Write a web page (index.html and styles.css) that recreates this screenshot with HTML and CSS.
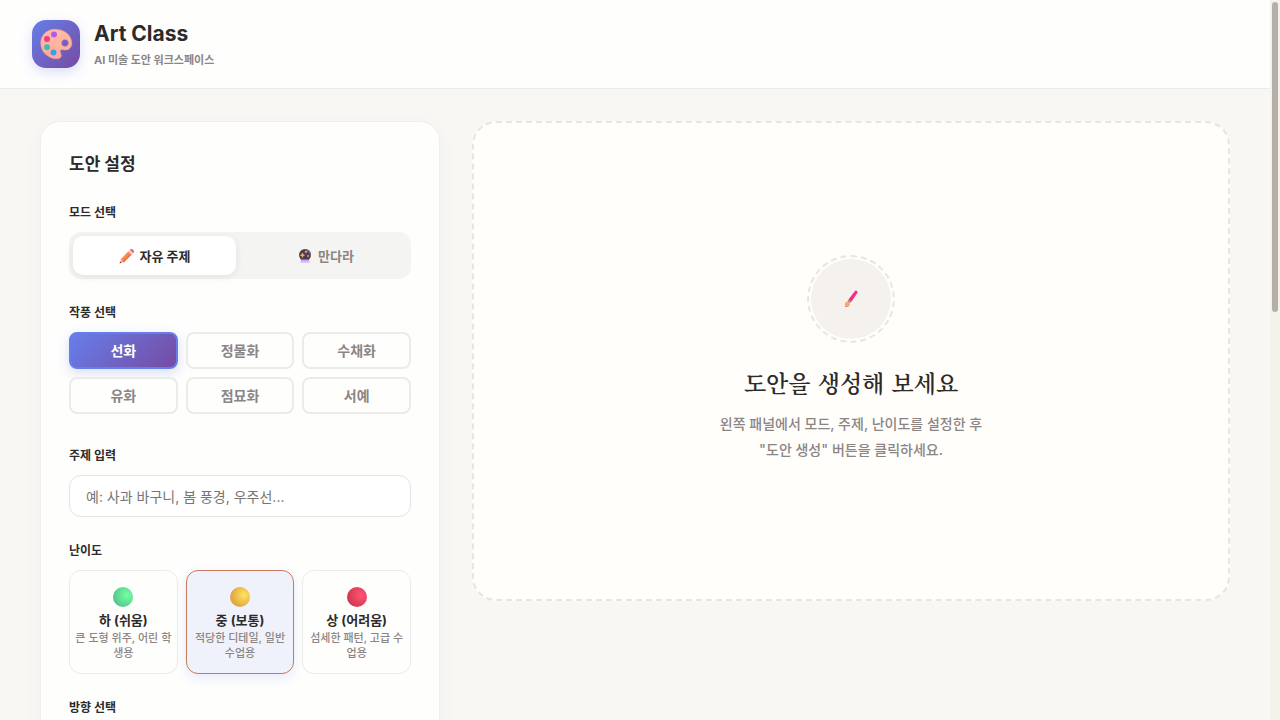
FILE: index.html
```html
<!DOCTYPE html>
<html lang="ko">
<head>
    <meta charset="UTF-8" />
    <meta name="viewport" content="width=device-width, initial-scale=1.0" />
    <title>Art Class</title>
    <link rel="stylesheet" href="styles.css">
</head>
<body>
    <header class="header">
        <div class="logo">
            <svg width="34" height="34" viewBox="0 0 34 34" aria-hidden="true">
                <defs>
                    <linearGradient id="palette" x1="0" y1="0" x2="0" y2="1">
                        <stop offset="0" stop-color="#ffbda4" />
                        <stop offset="1" stop-color="#ffaa9c" />
                    </linearGradient>
                </defs>
                <path fill="url(#palette)" stroke="#eb9490" stroke-width=".6" fill-rule="evenodd" d="M14 2.300C21 1.500 31 5 32.600 14C33.800 20 30 23.500 25.500 23C22.500 22.500 20.500 22.800 21.300 25C22.500 27.500 23 30 20.500 31.300C15 33.500 6 29 3 22.500C-.5 14 3 4 14 2.300ZM26 12.400A3.500 3.500 0 1 0 26 19.400A3.500 3.500 0 1 0 26 12.400Z" />
                <circle cx="15" cy="7.500" r="3" fill="#b25be8" />
                <circle cx="8" cy="12" r="3" fill="#ee3d8c" />
                <circle cx="8" cy="20.200" r="3" fill="#3fbdb5" />
                <circle cx="14.500" cy="25.500" r="3" fill="#3e9cf5" />
            </svg>
        </div>
        <div class="brand">
            <h1 class="brand-title">Art Class</h1>
            <p class="brand-subtitle">AI 미술 도안 워크스페이스</p>
        </div>
    </header>

    <main class="workspace">
        <aside class="panel">
            <h2 class="panel-title">도안 설정</h2>

            <section class="group">
                <h3 class="group-label">모드 선택</h3>
                <div class="mode-tabs">
                    <button type="button" class="mode-tab active">
                        <svg width="16" height="16" viewBox="0 0 16 16" aria-hidden="true">
                            <path fill="#ffb18f" d="M2 11.500L4.500 14L1.300 15.200Q.6 15.300.8 14.600Z" />
                            <path fill="#ff8548" d="M1.800 11.300L9.400 3.300L12.700 6.600L4.700 14.400Z" />
                            <path fill="#f0703f" d="M3.800 13.400L11.700 5.600L12.700 6.600L4.700 14.400Z" />
                            <path fill="#ddd0e8" d="M9.200 3.600L11 1.800L14.300 5L12.500 6.800Z" />
                            <path fill="#fc5c58" d="M11 1.900L11.900 1.100Q12.700.6 13.400 1.200L14.900 2.700Q15.400 3.400 14.900 4.200L14.200 5Z" />
                            <path fill="#65364e" d="M1.200 13.600L2.500 14.800L1.200 15.300Q.5 15.300.7 14.700Z" />
                        </svg>
                        자유 주제
                    </button>
                    <button type="button" class="mode-tab">
                        <svg width="16" height="16" viewBox="0 0 16 16" aria-hidden="true">
                            <circle cx="8" cy="7" r="6" fill="#4a3b5b" />
                            <path fill="#756680" d="M8 1A6 6 0 0 1 13.500 9.500Q13 4 8 1Z" />
                            <path fill="#ffaf4a" d="M5.500 4.500L6.400 6.300L8.200 7.200L6.400 8.100L5.500 10L4.600 8.100L2.700 7.200L4.600 6.300ZM9 2L9.600 3.200L10.800 3.800L9.600 4.400L9 5.600L8.400 4.400L7.200 3.800L8.400 3.200ZM11 6.500L11.500 7.500L12.400 8L11.500 8.500L11 9.500L10.500 8.500L9.600 8L10.500 7.500Z" />
                            <path fill="#c5a0e8" d="M4.200 11.500H11.800L12.500 14.500H3.500Z" />
                            <path fill="#dfc6f5" d="M3.600 13.200H12.400V14.800H3.600Z" />
                        </svg>
                        만다라
                    </button>
                </div>
            </section>

            <section class="group">
                <h3 class="group-label">작풍 선택</h3>
                <div class="style-grid">
                    <button type="button" class="style-btn active">선화</button>
                    <button type="button" class="style-btn">정물화</button>
                    <button type="button" class="style-btn">수채화</button>
                    <button type="button" class="style-btn">유화</button>
                    <button type="button" class="style-btn">점묘화</button>
                    <button type="button" class="style-btn">서예</button>
                </div>
            </section>

            <section class="group">
                <label class="group-label" for="topic">주제 입력</label>
                <input type="text" id="topic" class="topic-input" placeholder="예: 사과 바구니, 봄 풍경, 우주선..." />
            </section>

            <section class="group">
                <h3 class="group-label">난이도</h3>
                <div class="level-grid">
                    <button type="button" class="level-card">
                        <span class="level-dot easy"></span>
                        <span class="level-name">하 (쉬움)</span>
                        <span class="level-desc">큰 도형 위주, 어린 학생용</span>
                    </button>
                    <button type="button" class="level-card active">
                        <span class="level-dot normal"></span>
                        <span class="level-name">중 (보통)</span>
                        <span class="level-desc">적당한 디테일, 일반 수업용</span>
                    </button>
                    <button type="button" class="level-card">
                        <span class="level-dot hard"></span>
                        <span class="level-name">상 (어려움)</span>
                        <span class="level-desc">섬세한 패턴, 고급 수업용</span>
                    </button>
                </div>
            </section>

            <section class="group">
                <h3 class="group-label">방향 선택</h3>
            </section>
        </aside>

        <section class="preview">
            <div class="preview-icon">
                <svg width="16" height="18" viewBox="0 0 16 18" aria-hidden="true">
                    <path fill="#f72b82" d="M5.500 9.600L11.600 1.400Q12.700.1 13.900.9Q15 1.800 14.300 3L8.400 11.700Z" />
                    <path fill="#a38d9b" d="M5.900 9.200L8.500 11.500L6.900 13.200L4.500 11.300Z" />
                    <path fill="#ffa85c" d="M4.600 11.200Q7.200 12 6.900 14.200Q6.400 17 2.400 17Q1.600 16.900 2 16Q1.200 11.800 4.600 11.200Z" />
                    <path fill="#f4828b" d="M2 15.700Q4.500 16.500 6.600 15Q5.500 17.100 2.400 17Q1.600 16.900 2 15.700Z" />
                </svg>
            </div>
            <h2 class="preview-title">도안을 생성해 보세요</h2>
            <p class="preview-text">왼쪽 패널에서 모드, 주제, 난이도를 설정한 후<br>"도안 생성" 버튼을 클릭하세요.</p>
        </section>
    </main>

    <div class="scroll-track" aria-hidden="true">
        <div class="scroll-thumb"></div>
    </div>
</body>
</html>
```
FILE: styles.css
```css
/* Global Styling */
* {
    box-sizing: border-box;
    margin: 0;
    padding: 0;
}

body {
    font-family: Inter, "Noto Sans CJK KR", sans-serif;
    background: #f8f7f4;
    color: #2d2a2a;
    padding-right: 10px;
}

button, input {
    font-family: inherit;
}

/* Scrollbar */
::-webkit-scrollbar {
    display: none;
}

.scroll-track {
    position: fixed;
    top: 0;
    right: 0;
    bottom: 0;
    width: 10px;
    padding: 2px;
    background: #f5f2eb;
}

.scroll-thumb {
    height: 43.3%;
    border-radius: 3px;
    background: #b5afaa;
}

/* Header */
.header {
    display: flex;
    align-items: center;
    gap: 14px;
    padding: 18px 32px;
    background: #fefefd;
    border-bottom: 1px solid #ebebea;
}

.logo {
    display: flex;
    align-items: center;
    justify-content: center;
    width: 48px;
    height: 48px;
    border-radius: 14px;
    background: linear-gradient(135deg, #667eea, #764ba2);
    box-shadow: 0 4px 12px rgba(102, 126, 234, 0.25);
}

.brand-title {
    font-size: 21px;
    font-weight: 700;
    line-height: 32px;
}

.brand-subtitle {
    font-size: 11px;
    font-weight: 700;
    line-height: 20px;
    color: #8b8585;
}

/* Layout */
.workspace {
    display: grid;
    grid-template-columns: 400px 1fr;
    gap: 32px;
    align-items: start;
    padding: 32px 40px;
}

/* Settings Panel */
.panel {
    padding: 28px;
    background: #fefefd;
    border: 1px solid #f0efed;
    border-radius: 20px;
    box-shadow: 0 4px 20px rgba(0, 0, 0, 0.03);
}

.panel-title {
    font-size: 17px;
    font-weight: 700;
    line-height: 28px;
    margin-bottom: 25px;
}

.group {
    margin-bottom: 24px;
}

.group-label {
    display: block;
    font-size: 12px;
    font-weight: 700;
    line-height: 19px;
    margin-bottom: 10px;
}

/* Mode Tabs */
.mode-tabs {
    display: grid;
    grid-template-columns: 1fr 1fr;
    gap: 8px;
    padding: 4px;
    background: #f4f4f3;
    border-radius: 12px;
}

.mode-tab {
    display: flex;
    align-items: center;
    justify-content: center;
    gap: 5px;
    height: 39px;
    border: none;
    border-radius: 10px;
    background: transparent;
    color: #8b8585;
    font-size: 13px;
    font-weight: 700;
    cursor: pointer;
}

.mode-tab.active {
    background: #ffffff;
    color: #2d2a2a;
    box-shadow: 0 2px 8px rgba(0, 0, 0, 0.08);
}

/* Style Buttons */
.style-grid {
    display: grid;
    grid-template-columns: repeat(3, 1fr);
    gap: 8px;
    margin-bottom: 32px;
}

.style-btn {
    height: 37px;
    border: 2px solid #ebebea;
    border-radius: 8px;
    background: #fefefd;
    color: #8b8585;
    font-size: 14px;
    font-weight: 700;
    line-height: 18px;
    cursor: pointer;
}

.style-btn.active {
    border-color: #667eea;
    background: linear-gradient(135deg, #667eea, #764ba2);
    color: #ffffff;
    box-shadow: 0 4px 12px rgba(102, 126, 234, 0.25);
}

/* Topic Input */
.topic-input {
    display: block;
    width: 100%;
    height: 42px;
    padding: 0 16px;
    border: 1px solid #e4e4e3;
    border-radius: 12px;
    background: #ffffff;
    color: #2d2a2a;
    font-size: 14px;
    outline: none;
}

.topic-input::placeholder {
    color: #757575;
}

/* Difficulty Cards */
.level-grid {
    display: grid;
    grid-template-columns: repeat(3, 1fr);
    gap: 8px;
}

.level-card {
    display: flex;
    flex-direction: column;
    align-items: center;
    padding: 16px 4px 12px;
    border: 1px solid #ebebea;
    border-radius: 12px;
    background: #fefefd;
    cursor: pointer;
}

.level-card.active {
    border-color: #c67b5c;
    background: #f0f2fb;
    box-shadow: 0 4px 12px rgba(102, 126, 234, 0.15);
}

.level-dot {
    width: 20px;
    height: 20px;
    border-radius: 50%;
    margin-bottom: 2px;
}

.level-dot.easy {
    background: radial-gradient(circle at 70% 40%, #72ffa0, #5ad492 60%, #469a91);
}

.level-dot.normal {
    background: radial-gradient(circle at 70% 40%, #ffe45c, #e5ae45 60%, #cf8c55);
}

.level-dot.hard {
    background: radial-gradient(circle at 70% 40%, #ff5577, #dc3d54 60%, #b42e4a);
}

.level-name {
    font-size: 13px;
    font-weight: 700;
    line-height: 22px;
    color: #2d2a2a;
}

.level-desc {
    font-size: 11px;
    font-weight: 500;
    line-height: 15px;
    color: #8b8585;
    word-break: break-all;
}

/* Preview */
.preview {
    display: flex;
    flex-direction: column;
    align-items: center;
    justify-content: center;
    min-height: 480px;
    background: #fffefb;
    border: 2px dashed #e8e6e2;
    border-radius: 24px;
    text-align: center;
}

.preview-icon {
    position: relative;
    display: flex;
    align-items: center;
    justify-content: center;
    width: 80px;
    height: 80px;
    margin-bottom: 24px;
    border-radius: 50%;
    background: #f5f2ed;
}

.preview-icon::after {
    content: "";
    position: absolute;
    inset: -4px;
    border: 2px dashed #e8e6e2;
    border-radius: 50%;
}

.preview-title {
    font-family: "Noto Serif CJK KR", "Noto Serif KR", serif;
    font-size: 23px;
    font-weight: 600;
    line-height: 40px;
    margin-bottom: 8px;
}

.preview-text {
    font-size: 14px;
    font-weight: 500;
    line-height: 26px;
    color: #8b8585;
}
```
